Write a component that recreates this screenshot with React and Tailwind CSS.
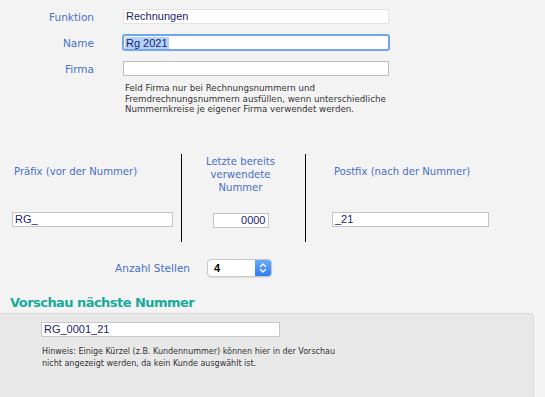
export default function App() {
  const lbl = "text-[#4a6fc7] text-[10.5px] leading-[12px]";
  const lbl2 = "text-[#4a6fc7] text-[10.1px] leading-[12px]";
  const inputBase = "bg-white h-[15px] flex items-center px-[2px] text-[11px] text-[#1c1c6b] leading-none";
  const sans = { fontFamily: '"Liberation Sans", Arial, sans-serif' };
  return (
    <div className="w-[545px] h-[397px] bg-[#f3f3f3] overflow-hidden flex flex-col" style={{ fontFamily: '"DejaVu Sans", Verdana, sans-serif' }}>
      {/* top form */}
      <div className="flex flex-col pt-[9px] gap-[11px]">
        <div className="flex items-center h-[15px]">
          <div className={`w-[94px] text-right ${lbl}`}>Funktion</div>
          <div className={`ml-[29px] w-[266px] border border-[#e4e4e4] ${inputBase}`} style={sans}>Rechnungen</div>
        </div>
        <div className="flex items-center h-[15px]">
          <div className={`w-[94px] text-right ${lbl}`}>Name</div>
          <div className="ml-[28px] w-[268px] h-[17px] rounded-[3px] border-2 border-[#72a5ef] bg-white flex items-center px-[1px]">
            <span className="bg-[#b3d3fb] text-[11px] text-[#1c1c6b] leading-[12px] px-[1px]" style={sans}>Rg 2021</span>
          </div>
        </div>
        <div className="flex items-center h-[15px]">
          <div className={`w-[94px] text-right ${lbl}`}>Firma</div>
          <div className={`ml-[29px] w-[266px] border border-[#bdbdbd] ${inputBase}`} style={sans}></div>
        </div>
      </div>
      <div className="ml-[125px] mt-[7px] text-[8.7px] leading-[10.6px] text-[#333]">
        <div>Feld Firma nur bei Rechnungsnummern und</div>
        <div>Fremdrechnungsnummern ausfüllen, wenn unterschiedliche</div>
        <div>Nummernkreise je eigener Firma verwendet werden.</div>
      </div>

      {/* columns */}
      <div className="flex mt-[39px] h-[88px]">
        <div className="w-[181px] flex flex-col pl-[12px]">
          <div className={`${lbl2} pl-[2px] mt-[12px]`}>Präfix (vor der Nummer)</div>
          <div className={`mt-[34px] w-[161px] border border-[#c4c4c4] ${inputBase}`} style={sans}>RG_</div>
        </div>
        <div className="w-[1px] bg-black"></div>
        <div className="w-[123px] flex flex-col items-center pr-[6px]">
          <div className={`${lbl2} text-center leading-[13px] mt-[1px]`}>Letzte bereits<br />verwendete<br />Nummer</div>
          <div className={`mt-[19px] w-[56px] justify-end border border-[#c4c4c4] ${inputBase}`} style={sans}>0000</div>
        </div>
        <div className="w-[1px] bg-black"></div>
        <div className="flex flex-col pl-[26px]">
          <div className={`${lbl2} pl-[2px] mt-[12px]`}>Postfix (nach der Nummer)</div>
          <div className={`mt-[34px] w-[157px] border border-[#c4c4c4] ${inputBase}`} style={sans}>_21</div>
        </div>
      </div>

      {/* Anzahl Stellen */}
      <div className="flex items-center mt-[17px] h-[18px]">
        <div className={`w-[190px] text-right ${lbl}`}>Anzahl Stellen</div>
        <div className="ml-[17px] w-[65px] h-[18px] rounded-[4px] border border-[#c8c8c8] bg-white flex overflow-hidden shadow-[0_1px_1px_rgba(0,0,0,0.08)]">
          <div className="flex-1 flex items-center pl-[6px] text-[11px] font-bold text-black" style={sans}>4</div>
          <div className="w-[16px] bg-gradient-to-b from-[#6aaaf9] to-[#2b7cf2] flex items-center justify-center">
            <svg width="8" height="12" viewBox="0 0 8 12" fill="none" stroke="white" strokeWidth="1.4" strokeLinecap="round" strokeLinejoin="round">
              <path d="M1.5 4.5 L4 2 L6.5 4.5" />
              <path d="M1.5 7.5 L4 10 L6.5 7.5" />
            </svg>
          </div>
        </div>
      </div>

      {/* Vorschau */}
      <div className="ml-[10px] mt-[18px] text-[13px] leading-[16px] font-bold tracking-[-0.55px] text-[#18aa9c]">Vorschau nächste Nummer</div>
      <div className="mt-[2px] w-[534px] flex-1 bg-[#e8e8e8] border-t border-r border-[#dcdcdc] rounded-tr-[3px] flex flex-col">
        <div className={`ml-[41px] mt-[8px] w-[239px] border border-[#c8c8c8] ${inputBase}`} style={sans}>RG_0001_21</div>
        <div className="ml-[42px] mt-[9px] text-[8px] leading-[12px] text-[#333]">
          <div>Hinweis: Einige Kürzel (z.B. Kundennummer) können hier in der Vorschau</div>
          <div>nicht angezeigt werden, da kein Kunde ausgwählt ist.</div>
        </div>
      </div>
    </div>
  );
}
